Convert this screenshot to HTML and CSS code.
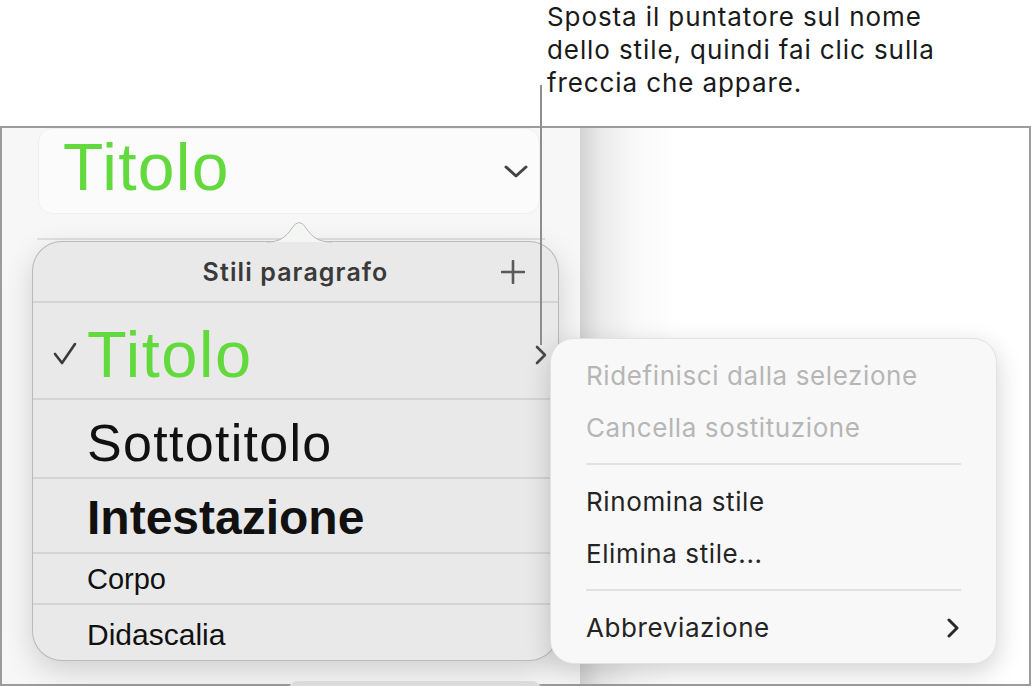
FILE: index.html
```html
<!DOCTYPE html>
<html lang="it">
<head>
    <meta charset="UTF-8">
    <meta name="viewport" content="width=device-width, initial-scale=1.0">
    <title>Stili paragrafo</title>
    <link rel="stylesheet" href="styles.css">
</head>
<body>
    <!-- Didascalia esterna -->
    <p class="callout">Sposta il puntatore sul nome<br>dello stile, quindi fai clic sulla<br>freccia che appare.</p>
    <div class="callout-line"></div>

    <div class="window">
        <div class="sidebar">
            <div class="style-picker">
                <span class="picker-name">Titolo</span>
                <svg class="picker-chevron" width="24" height="14" viewBox="0 0 24 14">
                    <path d="M2 2 L12 11 L22 2" fill="none" stroke="#444" stroke-width="3" stroke-linecap="round" stroke-linejoin="round"/>
                </svg>
            </div>
            <div class="divider"></div>
            <div class="pill"></div>
        </div>
        <div class="canvas"></div>

        <!-- Popover stili paragrafo -->
        <div class="popover">
            <svg class="popover-arrow" width="65" height="26" viewBox="0 0 65 26">
                <path d="M0 25 C13 25 19 20 25 11 Q32 0 39 11 C45 20 51 25 65 25" fill="#f4f6f4" stroke="#b9b9b9" stroke-width="1"/>
            </svg>
            <div class="popover-head">
                <span></span>
                <span class="head-title">Stili paragrafo</span>
                <svg class="head-plus" width="24" height="24" viewBox="0 0 24 24">
                    <path d="M12 1 V23 M1 12 H23" fill="none" stroke="#5a5a5a" stroke-width="2.6" stroke-linecap="round"/>
                </svg>
            </div>
            <div class="row row-title">
                <span class="mark">
                    <svg width="26" height="24" viewBox="0 0 26 24">
                        <path d="M2 12 L9 21 L22 2" fill="none" stroke="#3a3a3a" stroke-width="2.6" stroke-linecap="round" stroke-linejoin="round"/>
                    </svg>
                </span>
                <span class="name">Titolo</span>
                <svg class="row-chevron" width="14" height="20" viewBox="0 0 14 20">
                    <path d="M3 2 L11 10 L3 18" fill="none" stroke="#4a4a4a" stroke-width="2.6" stroke-linecap="round" stroke-linejoin="round"/>
                </svg>
            </div>
            <div class="row row-subtitle"><span class="mark"></span><span class="name">Sottotitolo</span></div>
            <div class="row row-heading"><span class="mark"></span><span class="name">Intestazione</span></div>
            <div class="row row-body"><span class="mark"></span><span class="name">Corpo</span></div>
            <div class="row row-caption"><span class="mark"></span><span class="name">Didascalia</span></div>
        </div>

        <!-- Menu contestuale -->
        <div class="menu">
            <div class="menu-item disabled">Ridefinisci dalla selezione</div>
            <div class="menu-item disabled">Cancella sostituzione</div>
            <div class="menu-sep"></div>
            <div class="menu-item">Rinomina stile</div>
            <div class="menu-item">Elimina stile...</div>
            <div class="menu-sep"></div>
            <div class="menu-item has-sub">
                <span>Abbreviazione</span>
                <svg width="16" height="20" viewBox="0 0 16 20">
                    <path d="M4 2 L12 10 L4 18" fill="none" stroke="#2a2a2a" stroke-width="3" stroke-linecap="round" stroke-linejoin="round"/>
                </svg>
            </div>
        </div>
    </div>
</body>
</html>
```

FILE: styles.css
```css
body {
    margin: 0;
    width: 1031px;
    height: 686px;
    overflow: hidden;
    position: relative;
    background: #fff;
    font-family: 'Liberation Sans', Arial, sans-serif;
}

.callout {
    margin: 0;
    height: 126px;
    padding-left: 547px;
    box-sizing: border-box;
    font-family: 'Inter', 'Noto Sans', sans-serif;
    font-size: 26px;
    letter-spacing: 0.9px;
    line-height: 33px;
    color: #1a1a1a;
}

.callout-line {
    position: absolute;
    left: 540px;
    top: 85px;
    width: 2px;
    height: 260px;
    background: #8e8e8e;
    z-index: 10;
}

.window {
    position: relative;
    display: flex;
    width: 1031px;
    height: 560px;
    box-sizing: border-box;
    border: 2px solid #9c9c9c;
}

.sidebar {
    flex: none;
    width: 578px;
    background: #f7f7f7;
}

.canvas {
    flex: 1;
    background: linear-gradient(to right, #d3d3d3, #ebebeb 22px, #f9f9f9 55px, #fff 100px);
}

.style-picker {
    display: flex;
    align-items: flex-start;
    justify-content: space-between;
    margin-left: 36px;
    width: 502px;
    height: 86px;
    box-sizing: border-box;
    padding: 5px 11px 0 24px;
    background: #fbfbfb;
    border: 1px solid #efefef;
    border-radius: 14px;
}

.picker-name {
    font-size: 66px;
    letter-spacing: 1.3px;
    line-height: 1;
    color: #62d93c;
}

.picker-chevron {
    margin-top: 31px;
}

.divider {
    margin: 24px 0 0 35px;
    width: 508px;
    height: 2px;
    background: #e0e0e0;
}

.pill {
    margin: 441px 0 0 286px;
    width: 254px;
    height: 20px;
    border-radius: 10px;
    background: #e2e2e2;
}

/* popover */
.popover {
    position: absolute;
    left: 30px;
    top: 113px;
    width: 527px;
    box-sizing: border-box;
    background: #e9e9e9;
    border: 1px solid rgba(0, 0, 0, 0.2);
    border-radius: 30px;
    box-shadow: 0 10px 30px rgba(0, 0, 0, 0.16);
    z-index: 2;
}

.popover-arrow {
    position: absolute;
    left: 234px;
    top: -25px;
}

.popover-head {
    display: grid;
    grid-template-columns: 1fr auto 1fr;
    align-items: center;
    height: 59px;
    padding: 0 33px 0;
    box-sizing: border-box;
}

.head-title {
    font-family: 'Inter', 'Noto Sans', sans-serif;
    font-weight: 600;
    font-size: 25px;
    letter-spacing: 1.1px;
    color: #3a3a3a;
}

.head-plus {
    justify-self: end;
}

.row {
    display: flex;
    align-items: flex-start;
    box-sizing: border-box;
    border-top: 2px solid #d4d4d4;
    color: #111;
    line-height: 1;
    white-space: nowrap;
}

.mark {
    flex: none;
    width: 54px;
}

.row-title { height: 97px; padding-top: 19px; }
.row-title .name { font-size: 65px; letter-spacing: 1.5px; color: #62d93c; }
.row-title .mark svg { margin: 20px 0 0 20px; }
.row-chevron { margin: 23px 10px 0 auto; }

.row-subtitle { height: 79px; padding-top: 17px; }
.row-subtitle .name { font-size: 52px; letter-spacing: 1.3px; }

.row-heading { height: 75px; padding-top: 15px; }
.row-heading .name { font-size: 48px; font-weight: bold; }

.row-body { height: 51px; padding-top: 11px; }
.row-body .name { font-size: 29px; }

.row-caption { height: 57px; padding-top: 15px; }
.row-caption .name { font-size: 30px; }

/* menu */
.menu {
    position: absolute;
    left: 548px;
    top: 210px;
    width: 447px;
    box-sizing: border-box;
    padding: 11px 0 9px;
    background: #f8f8f8;
    border: 1px solid #e2e2e2;
    border-radius: 24px;
    box-shadow: 0 8px 26px rgba(0, 0, 0, 0.18);
    font-family: 'Inter', 'Noto Sans', sans-serif;
    font-size: 26px;
    letter-spacing: 0.6px;
    z-index: 3;
}

.menu-item {
    padding: 0 35px;
    line-height: 51.5px;
    color: #242424;
}

.menu-item.disabled {
    color: #b6b6b6;
}

.menu-item.has-sub {
    display: flex;
    align-items: center;
    justify-content: space-between;
    padding-right: 35px;
}

.menu-sep {
    margin: 10px 35px 11px;
    height: 2px;
    background: #e2e2e2;
}
```
